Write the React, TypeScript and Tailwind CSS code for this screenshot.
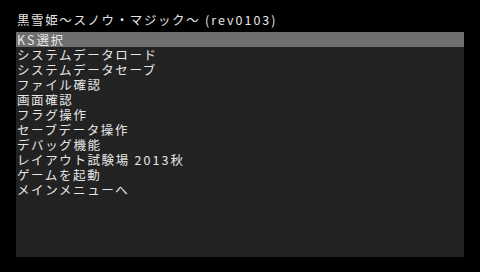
import React from 'react'

const items = [
  'KS選択',
  'システムデータロード',
  'システムデータセーブ',
  'ファイル確認',
  '画面確認',
  'フラグ操作',
  'セーブデータ操作',
  'デバッグ機能',
  'レイアウト試験場 2013秋',
  'ゲームを起動',
  'メインメニューへ',
]

// ascii runs get their own spacing, the latin glyphs are narrower than the kana
function Label({ text }: { text: string }) {
  const parts = text.split(/([\x20-\x7e]+)/).filter(Boolean)
  return (
    <>
      {parts.map((p, i) =>
        /^[\x20-\x7e]+$/.test(p) ? (
          <span key={i} className="block whitespace-pre tracking-[2px] leading-[13px]">{p}</span>
        ) : (
          <span key={i} className="block whitespace-pre leading-[13px]">{p}</span>
        )
      )}
    </>
  )
}

export default function App() {
  return (
    <div
      className="w-[480px] h-[272px] bg-black text-[#e6e6e6] flex flex-col px-4 pt-[13px]"
      style={{ fontFamily: '"Noto Sans CJK JP", "Noto Sans", sans-serif' }}
    >
      <div className="h-[19px] flex pl-[1px] text-[12.5px] tracking-[1.6px]">
        <Label text="黒雪姫～スノウ・マジック～ (rev0103)" />
      </div>
      <ul className="h-[225px] bg-[#222222]">
        {items.map((q, idx) => (
          <li
            key={idx}
            className={
              'h-[15px] flex pt-[1px] pl-[1px] text-[12.5px] tracking-[1.6px] ' +
              (idx === 0 ? 'bg-[#6f6f6f]' : '')
            }
          >
            <Label text={q} />
          </li>
        ))}
      </ul>
    </div>
  )
}
